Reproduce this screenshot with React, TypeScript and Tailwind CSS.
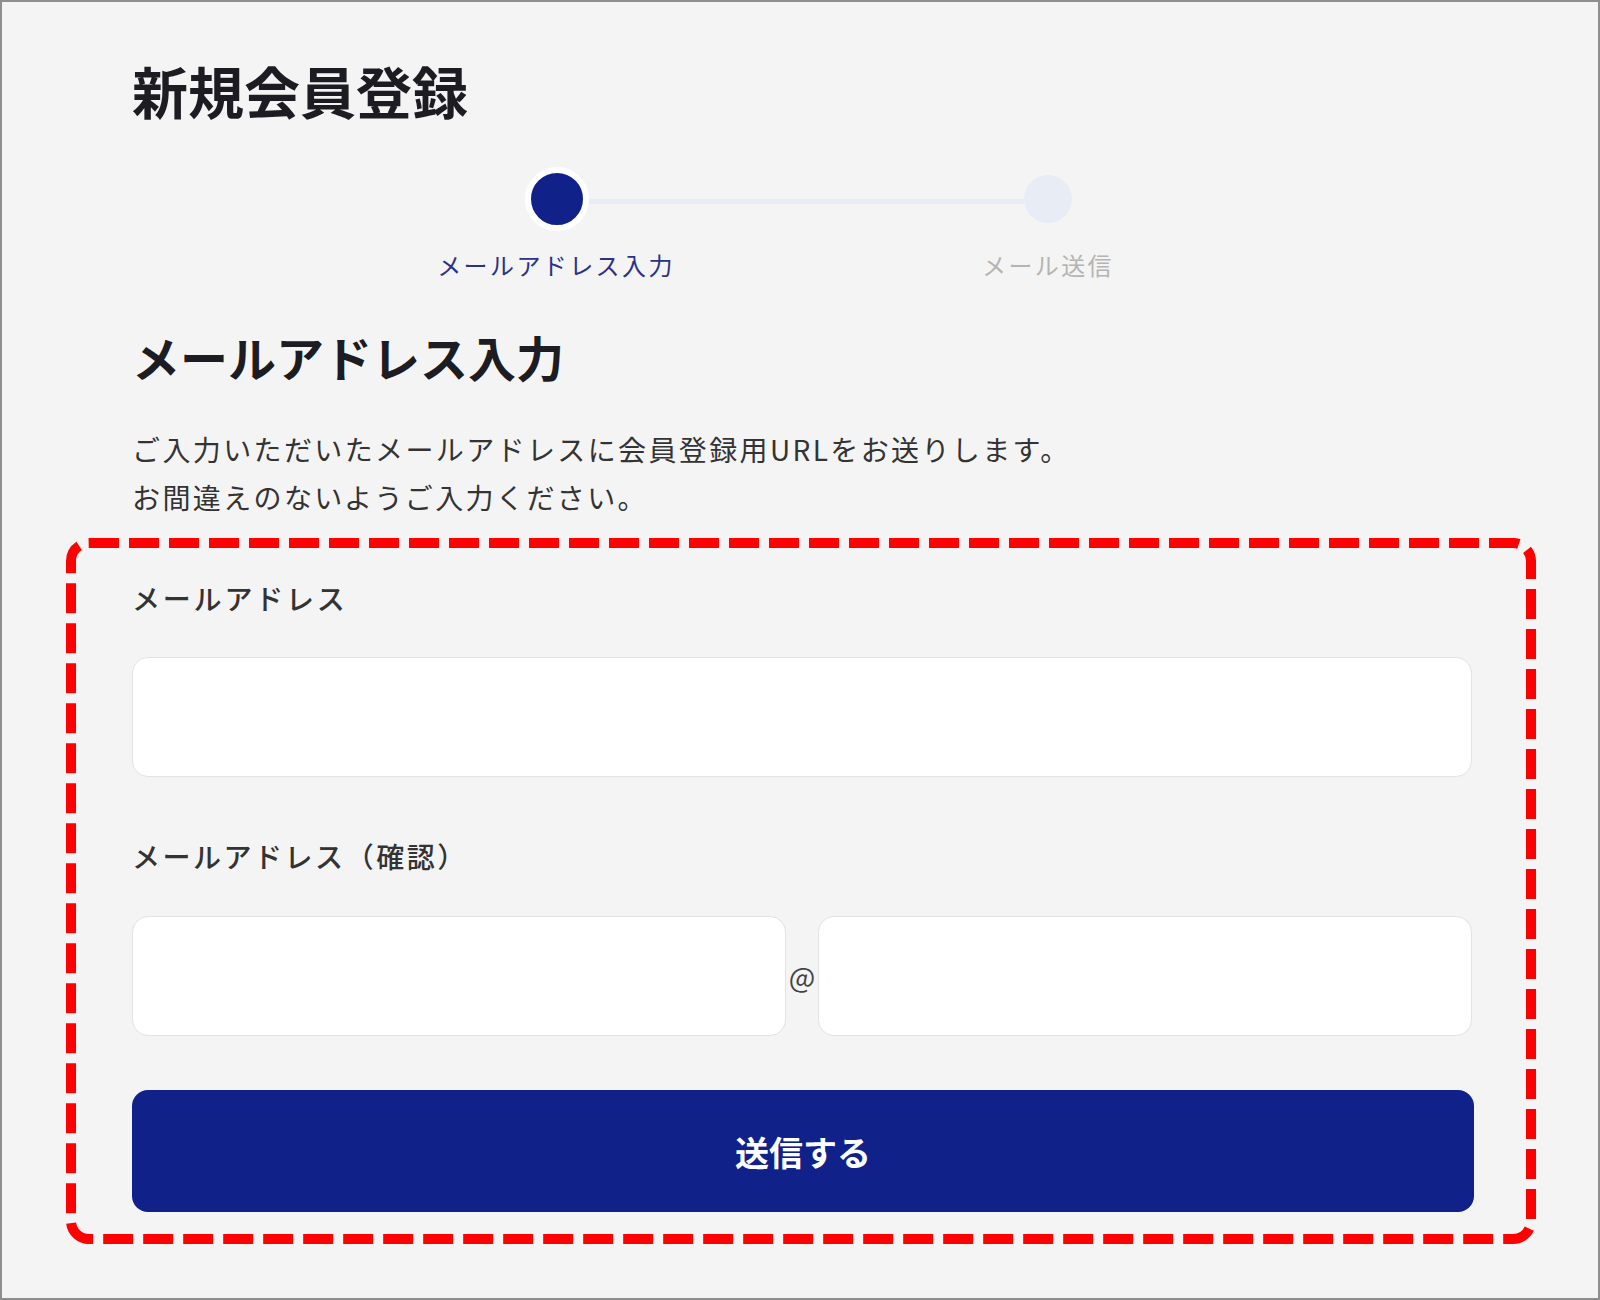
import React from 'react';

const steps = [
  { label: 'メールアドレス入力', active: true },
  { label: 'メール送信', active: false },
];

function Stepper() {
  return (
    <div className="pl-[66px]">
      <div className="mt-[49px] flex items-center pl-[393px]">
        <div className="h-[64px] w-[64px] rounded-full border-[6px] border-white bg-[#10228a]" />
        <div className="mt-[5px] h-[5px] w-[435px] bg-[#e8ecf5]" />
        <div className="h-[48px] w-[48px] rounded-full bg-[#e8ecf5]" />
      </div>
      <div className="mt-[22px] flex gap-[192px] pl-[274px]">
        {steps.map((step) => (
          <span
            key={step.label}
            className={`w-[300px] text-center text-[24px] leading-[24px] tracking-[0.1em] ${
              step.active ? 'text-[#2b3384]' : 'text-[#b4b4b4]'
            }`}
          >
            {step.label}
          </span>
        ))}
      </div>
    </div>
  );
}

function TextInput({ className = '' }: { className?: string }) {
  return (
    <input
      type="text"
      className={`h-[120px] rounded-[16px] border border-[#e3e3e3] bg-white px-6 text-[28px] outline-none ${className}`}
    />
  );
}

export default function App() {
  return (
    <div className="h-[1300px] w-[1600px] border-2 border-[#8e8e8e] bg-[#f4f4f4] font-['Noto_Sans_CJK_JP','Noto_Sans',sans-serif] text-[#333333]">
      <div className="pl-[64px] pt-[60px]">
        <h1 className="pl-[66px] text-[56px] font-bold leading-[56px] text-[#1c1c22]">
          新規会員登録
        </h1>

        <Stepper />

        <h2 className="mt-[55px] pl-[66px] text-[48px] font-bold leading-[48px] text-[#1c1c22]">
          メールアドレス入力
        </h2>

        <p className="mt-[45px] pl-[66px] text-[28px] leading-[48px] tracking-[0.085em] text-[#333333]">
          ご入力いただいたメールアドレスに会員登録用URLをお送りします。
          <br />
          お間違えのないようご入力ください。
        </p>

        {/* Form area, outlined with the red dashed highlight */}
        <form
          className="relative mt-[17px] w-[1470px] pb-[32px] pl-[66px] pr-[64px] pt-[46px]"
          onSubmit={(e) => e.preventDefault()}
        >
          <svg className="pointer-events-none absolute inset-[5px] h-[calc(100%-10px)] w-[calc(100%-10px)] overflow-visible">
            <rect
              width="100%"
              height="100%"
              rx="18"
              fill="none"
              stroke="#ff0000"
              strokeWidth="10"
              strokeDasharray="30 10"
            />
          </svg>

          <label className="block text-[28px] font-medium leading-[28px] tracking-[0.1em] text-[#333333]">
            メールアドレス
          </label>
          <TextInput className="mt-[45px] block w-full" />

          <label className="mt-[65px] block text-[28px] font-medium leading-[28px] tracking-[0.09em] text-[#333333]">
            メールアドレス（確認）
          </label>
          <div className="mt-[46px] flex items-center">
            <TextInput className="w-[654px]" />
            <span className="w-[32px] text-center text-[28px] text-[#444444]">@</span>
            <TextInput className="w-[654px]" />
          </div>

          <button
            type="submit"
            className="mt-[54px] flex h-[122px] w-[1342px] items-center justify-center rounded-[16px] bg-[#10228a] text-[34px] font-bold text-white"
          >
            送信する
          </button>
        </form>
      </div>
    </div>
  );
}
